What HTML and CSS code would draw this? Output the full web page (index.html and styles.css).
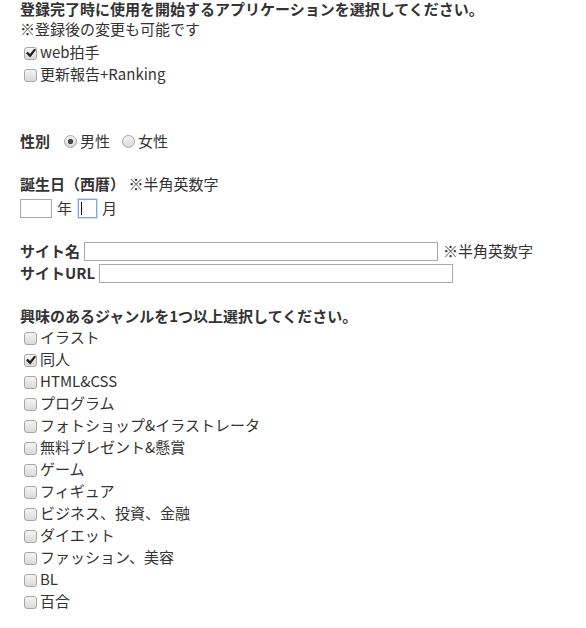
FILE: index.html
```html
<!DOCTYPE html>
<html lang="ja">
<head>
    <meta charset="UTF-8">
    <meta name="viewport" content="width=device-width, initial-scale=1.0">
    <title>登録</title>
    <link rel="stylesheet" href="styles.css">
</head>
<body>
    <form class="signup">
        <p class="lead">登録完了時に使用を開始するアプリケーションを選択してください。</p>
        <p class="note">※登録後の変更も可能です</p>
        <ul class="checks apps">
            <li><label><input type="checkbox" checked>web拍手</label></li>
            <li><label><input type="checkbox">更新報告+Ranking</label></li>
        </ul>

        <div class="gender">
            <span class="label">性別</span>
            <label class="choice"><input type="radio" name="sex" checked>男性</label>
            <label class="choice"><input type="radio" name="sex">女性</label>
        </div>

        <div class="section">
            <p><span class="label">誕生日（西暦）</span> ※半角英数字</p>
            <div class="date-row">
                <input type="text" class="field year">
                <span class="unit">年</span>
                <span class="focus-wrap">
                    <input type="text" class="field month is-focused">
                    <span class="caret"></span>
                </span>
                <span class="unit">月</span>
            </div>
        </div>

        <div class="section">
            <div class="site-row">
                <span class="label">サイト名</span>
                <input type="text" class="field site">
                <span class="hint">※半角英数字</span>
            </div>
            <div class="site-row">
                <span class="label">サイトURL</span>
                <input type="text" class="field site">
            </div>
        </div>

        <div class="section">
            <p class="label">興味のあるジャンルを1つ以上選択してください。</p>
            <ul class="checks genres">
                <li><label><input type="checkbox">イラスト</label></li>
                <li><label><input type="checkbox" checked>同人</label></li>
                <li><label><input type="checkbox">HTML&amp;CSS</label></li>
                <li><label><input type="checkbox">プログラム</label></li>
                <li><label><input type="checkbox">フォトショップ&amp;イラストレータ</label></li>
                <li><label><input type="checkbox">無料プレゼント&amp;懸賞</label></li>
                <li><label><input type="checkbox">ゲーム</label></li>
                <li><label><input type="checkbox">フィギュア</label></li>
                <li><label><input type="checkbox">ビジネス、投資、金融</label></li>
                <li><label><input type="checkbox">ダイエット</label></li>
                <li><label><input type="checkbox">ファッション、美容</label></li>
                <li><label><input type="checkbox">BL</label></li>
                <li><label><input type="checkbox">百合</label></li>
            </ul>
        </div>
    </form>
</body>
</html>
```

FILE: styles.css
```css
* { box-sizing: border-box; margin: 0; padding: 0; }
body {
    font-family: "Noto Sans CJK JP", sans-serif;
    font-size: 15px;
    line-height: 22px;
    color: #333;
    background: #fff;
}
.signup {
    padding: 0 20px;
}
.lead {
    font-weight: bold;
    line-height: 18px;
}
.label {
    font-weight: bold;
}
.checks {
    list-style: none;
    margin-top: 1px;
}
.checks li {
    height: 22px;
}
.checks label,
.choice {
    display: flex;
    align-items: center;
}
.genres {
    margin-top: -1px;
}

/* old style grey checkbox / radio */
input[type="checkbox"],
input[type="radio"] {
    appearance: none;
    -webkit-appearance: none;
    position: relative;
    width: 13px;
    height: 13px;
    margin: 2px 3px 0 4px;
    border: 1px solid #a7a7a7;
    background: linear-gradient(#f4f4f4, #dadada);
}
input[type="checkbox"] {
    border-radius: 3px;
}
input[type="checkbox"]:checked::before {
    content: "";
    position: absolute;
    left: 1px;
    top: 1px;
    width: 10px;
    height: 9px;
    background: #1e1e1e;
    clip-path: polygon(0 52%, 18% 36%, 40% 62%, 84% 0, 100% 14%, 42% 100%);
}
input[type="radio"] {
    border-radius: 50%;
    margin: 1px 3px 0 0;
}
input[type="radio"]:checked {
    background: radial-gradient(circle, #4a4a4a 0 2.4px, transparent 3px), linear-gradient(#f4f4f4, #dadada);
}

.gender {
    display: flex;
    align-items: center;
    margin-top: 45px;
}
.gender .label {
    margin-right: 14px;
}
.gender .choice + .choice {
    margin-left: 12px;
}

.section {
    margin-top: 21px;
}
.date-row {
    display: flex;
    align-items: center;
    height: 22px;
    margin-top: 2px;
}
.field {
    height: 19px;
    border: 1px solid #a9a9a9;
    background: #fff;
    font: inherit;
    outline: none;
}
.year {
    width: 32px;
}
.month {
    width: 19px;
}
.is-focused {
    border-color: #7ea6dd;
    box-shadow: 0 0 0 1px rgba(126, 166, 221, 0.35);
}
.unit {
    margin: 0 0 0 5px;
}
.focus-wrap {
    position: relative;
    display: flex;
    margin-left: 6px;
}
.caret {
    position: absolute;
    left: 3px;
    top: 3px;
    width: 1px;
    height: 13px;
    background: #000;
}

.site-row {
    display: flex;
    align-items: center;
    height: 22px;
}
.site {
    width: 354px;
    margin-left: 4px;
}
.hint {
    margin-left: 5px;
}
```
